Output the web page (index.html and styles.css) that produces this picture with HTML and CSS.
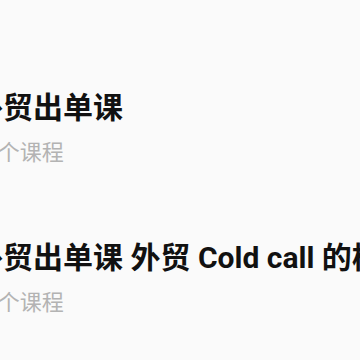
FILE: index.html
```html
<!DOCTYPE html>
<html lang="zh-CN">
<head>
<meta charset="utf-8">
<title>课程</title>
<link rel="stylesheet" href="styles.css">
</head>
<body>
<ul class="course-list">
  <li class="course">
    <div class="course-title">外贸出单课</div>
    <div class="course-meta">12个课程</div>
  </li>
  <li class="course">
    <div class="course-title">外贸出单课 外贸 Cold call 的样板课</div>
    <div class="course-meta">12个课程</div>
  </li>
</ul>
</body>
</html>
```
FILE: styles.css
```css
html, body {
  margin: 0;
  padding: 0;
  background: #fafafa;
  overflow: hidden;
}
body {
  width: 360px;
  height: 360px;
  font-family: Roboto, "Noto Sans CJK SC", sans-serif;
}
.course-list {
  list-style: none;
  margin: 0 0 0 -27px;
  padding: 88px 0 0 0;
  display: flex;
  flex-direction: column;
  gap: 70px;
}
.course {
  display: flex;
  flex-direction: column;
  gap: 10px;
}
.course-title {
  font-size: 30px;
  line-height: 40px;
  font-weight: 700;
  color: #111;
  white-space: nowrap;
}
.course-meta {
  font-size: 22px;
  line-height: 30px;
  color: #b3b3b3;
  white-space: nowrap;
}
```
